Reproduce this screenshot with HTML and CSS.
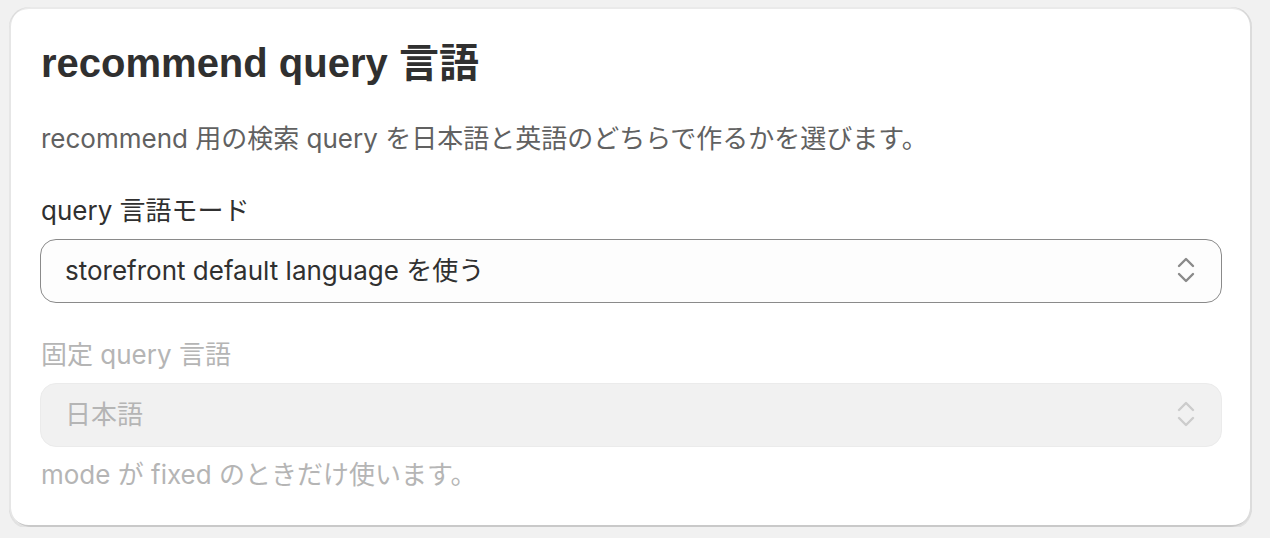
FILE: index.html
```html
<!DOCTYPE html>
<html lang="ja">
<head>
<meta charset="utf-8">
<title>recommend query 言語</title>
<link rel="stylesheet" href="styles.css">
</head>
<body>
<section class="card">
  <h2 class="card-title">recommend query 言語</h2>
  <p class="card-desc">recommend 用の検索 query を日本語と英語のどちらで作るかを選びます。</p>
  <div class="field">
    <label class="field-label" for="mode">query 言語モード</label>
    <div class="select">
      <span class="select-value">storefront default language を使う</span>
      <svg class="select-icon" viewBox="0 0 40 40" width="40" height="40" aria-hidden="true">
        <path d="M13 15 L20 8 L27 15 M13 23 L20 30 L27 23" fill="none" stroke="currentColor" stroke-width="2.4" stroke-linecap="round" stroke-linejoin="round"/>
      </svg>
    </div>
  </div>
  <div class="field is-disabled">
    <label class="field-label">固定 query 言語</label>
    <div class="select">
      <span class="select-value">日本語</span>
      <svg class="select-icon" viewBox="0 0 40 40" width="40" height="40" aria-hidden="true">
        <path d="M13 15 L20 8 L27 15 M13 23 L20 30 L27 23" fill="none" stroke="currentColor" stroke-width="2.4" stroke-linecap="round" stroke-linejoin="round"/>
      </svg>
    </div>
    <p class="field-help">mode が fixed のときだけ使います。</p>
  </div>
</section>
</body>
</html>
```

FILE: styles.css
```css
* { box-sizing: border-box; }

html, body {
  margin: 0;
  background: #f1f1f1;
}

body {
  padding: 7px 18px 0 9px;
  font-family: Inter, "Noto Sans CJK JP", sans-serif;
  font-size: 26px;
  line-height: 40px;
  color: #303030;
}

.card {
  background: #ffffff;
  border-radius: 20px;
  padding: 32px 30px 32px 31px;
  display: flex;
  flex-direction: column;
  gap: 32px;
  box-shadow:
    0 2px 0 rgba(26, 26, 26, 0.07),
    inset 0 2px 0 rgba(208, 208, 208, 0.45),
    inset 2px 0 0 #e6e6e6,
    inset -2px 0 0 #dcdcdc,
    inset 0 -2px 0 #c9c9c9;
}

.card-title,
.card-desc,
.field-label,
.field-help {
  padding-left: 1px;
}

.card-title {
  margin: 0;
  font-family: "Liberation Sans", Arial, "Noto Sans CJK JP", sans-serif;
  font-weight: 700;
  font-size: 40px;
  line-height: 48px;
  color: #303030;
}

.card-desc {
  margin: 0;
  color: #616161;
}

.field {
  display: flex;
  flex-direction: column;
  gap: 8px;
}

.field-label {
  color: #303030;
}

.select {
  height: 64px;
  display: flex;
  align-items: center;
  justify-content: space-between;
  padding: 0 15px 0 24px;
  border: 1.3px solid #8a8a8a;
  border-radius: 16px;
  background: #fdfdfd;
  color: #303030;
}

.select-icon {
  color: #8a8a8a;
  flex: none;
}

.field-help {
  margin: 0;
}

.is-disabled .field-label,
.is-disabled .field-help,
.is-disabled .select-value {
  color: #b5b5b5;
}

.is-disabled .select {
  background: #f1f1f1;
  border-color: #ebebeb;
}

.is-disabled .select-icon {
  color: #cccccc;
}
```
